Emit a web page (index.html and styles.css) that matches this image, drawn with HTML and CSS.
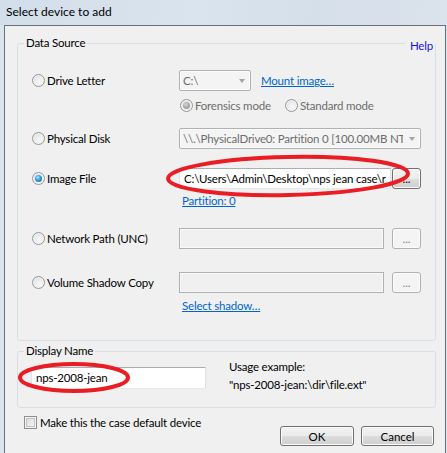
FILE: index.html
```html
<!DOCTYPE html>
<html lang="en">
<head>
<meta charset="utf-8">
<title>Select device to add</title>
<link rel="stylesheet" href="styles.css">
</head>
<body>
<div class="window">
  <div class="titlebar">Select device to add</div>
  <div class="client">
    <fieldset class="group data">
      <legend>Data Source</legend>
      <a class="help">Help</a>

      <div class="row drive">
        <label class="opt"><span class="radio"></span>Drive Letter</label>
        <div class="ctrl">
          <div class="combo small"><span class="val">C:\</span><span class="arrow"></span></div>
          <a class="link mount">Mount image…</a>
        </div>
      </div>

      <div class="row mode">
        <span></span>
        <div class="ctrl modes">
          <label class="opt dis forensic"><span class="radio on dis"></span>Forensics mode</label>
          <label class="opt dis"><span class="radio dis"></span>Standard mode</label>
        </div>
      </div>

      <div class="row physical">
        <label class="opt"><span class="radio"></span>Physical Disk</label>
        <div class="ctrl">
          <div class="combo wide"><span class="val">\\.\PhysicalDrive0: Partition 0 [100.00MB NTFS]</span><span class="arrow"></span></div>
        </div>
      </div>

      <div class="row image">
        <label class="opt"><span class="radio on"></span>Image File</label>
        <div class="ctrl">
          <div class="field path">C:\Users\Admin\Desktop\nps jean case\r</div>
          <button class="btn dots img-btn">...</button>
        </div>
      </div>

      <div class="row sub partition">
        <span></span>
        <a class="link sublink">Partition: 0</a>
      </div>

      <div class="row network">
        <label class="opt"><span class="radio"></span>Network Path (UNC)</label>
        <div class="ctrl">
          <div class="field dis short"></div>
          <button class="btn dots dis">...</button>
        </div>
      </div>

      <div class="row volume">
        <label class="opt"><span class="radio"></span>Volume Shadow Copy</label>
        <div class="ctrl">
          <div class="field dis short"></div>
          <button class="btn dots dis">...</button>
        </div>
      </div>

      <div class="row sub shadow">
        <span></span>
        <a class="link sublink">Select shadow…</a>
      </div>
    </fieldset>

    <fieldset class="group display">
      <legend>Display Name</legend>
      <div class="namerow">
        <div class="field namefield">nps-2008-jean</div>
        <div class="usage">
          <div>Usage example:</div>
          <div>"nps-2008-jean:\dir\file.ext"</div>
        </div>
      </div>
    </fieldset>

    <div class="footer">
      <label class="check"><span class="box"></span>Make this the case default device</label>
      <div class="buttons">
        <button class="btn ok">OK</button>
        <button class="btn cancel">Cancel</button>
      </div>
    </div>
  </div>
</div>
<svg class="marks" width="447" height="453" viewBox="0 0 447 453" aria-hidden="true">
  <ellipse cx="288" cy="176" rx="120" ry="19" transform="rotate(-1.2 288 176)" />
  <ellipse cx="74" cy="377.5" rx="54" ry="13.5" />
</svg>
</body>
</html>
```
FILE: styles.css
```css
* { box-sizing: border-box; }
html, body { margin: 0; padding: 0; }
body {
  width: 447px;
  height: 453px;
  overflow: hidden;
  position: relative;
  background: #dae4ee;
  font-family: Lato, "Liberation Sans", sans-serif;
  font-size: 11.5px;
  letter-spacing: -0.2px;
  color: #000;
}
.titlebar {
  height: 25px;
  padding-left: 6px;
  line-height: 24px;
  font-size: 12px;
  letter-spacing: 0;
  background: linear-gradient(100deg, #d2deea 0%, #dae4ee 45%, #d5dfea 70%, #dbe3ec 100%);
}
.client {
  margin: 0 1px 0 4px;
  height: 428px;
  border: 1px solid #6c7178;
  border-bottom: 0;
  background: #f0f0f0;
  padding: 9px 0 0 12px;
}
.group {
  position: relative;
  margin: 0;
  width: 419px;
  border: 1px solid #d5dfe5;
  border-radius: 3px;
  padding: 0 14px;
  min-width: 0;
}
.group legend {
  margin-left: -8px;
  padding: 0 2px;
  line-height: 16px;
}
.data { height: 306px; padding-top: 19px; }
.display { height: 65px; margin-top: 2px; padding-left: 13px; }
.display legend { margin-left: -7px; }

.help {
  position: absolute;
  right: 0;
  top: -13px;
  padding: 0 2px 0 5px;
  line-height: 16px;
  background: #f0f0f0;
  color: #1616e8;
}

.row {
  display: grid;
  grid-template-columns: 147px 242px;
  align-items: center;
}
.opt {
  display: flex;
  align-items: center;
  gap: 2px;
  white-space: nowrap;
}
.ctrl { display: flex; align-items: center; }
.drive { height: 21px; }
.mode { height: 13px; margin-top: 8px; }
.physical { height: 21px; margin-top: 16px; }
.image { height: 21px; margin-top: 19px; }
.partition { height: 15px; margin-top: 4px; }
.network { height: 21px; margin-top: 20px; }
.volume { height: 21px; margin-top: 23px; }
.shadow { height: 15px; margin-top: 5px; }

.modes { padding-left: 1px; }
.forensic { width: 105px; }
.dis { color: #6d6d6d; }

.radio {
  position: relative;
  flex: none;
  width: 13px;
  height: 13px;
  border-radius: 50%;
  border: 1px solid #94979a;
  background: radial-gradient(circle at 60% 65%, #f8f8f8 0%, #ececec 45%, #cfd2d6 100%);
  box-shadow: inset 0 0 0 1px #f5f5f5;
}
.radio.on::after {
  content: "";
  position: absolute;
  left: 2px;
  top: 2px;
  width: 7px;
  height: 7px;
  border-radius: 50%;
  background: radial-gradient(circle at 40% 35%, #b4eaff 0%, #35a2e8 40%, #0c5a9c 100%);
}
.radio.on.dis::after {
  background: radial-gradient(circle at 40% 35%, #d8d8d8 0%, #a8a8a8 50%, #8a8a8a 100%);
}

.link {
  color: #0066cc;
  text-decoration: underline;
  line-height: 15px;
  white-space: nowrap;
}
.mount { margin-left: 10px; }
.sublink { margin-left: 3px; }

.combo {
  display: flex;
  align-items: center;
  height: 21px;
  border: 1px solid #adb2b5;
  border-radius: 2px;
  background: #f4f4f4;
  box-shadow: inset 0 0 0 1px #fbfbfb;
  color: #6d6d6d;
  padding: 0 5px 0 3px;
  white-space: nowrap;
  overflow: hidden;
}
.combo.small { width: 72px; }
.combo.wide { width: 242px; }
.combo .val { flex: 1; overflow: hidden; min-width: 0; }
.arrow {
  flex: none;
  margin-left: 6px;
  margin-top: 1px;
  width: 0;
  height: 0;
  border-left: 3.5px solid transparent;
  border-right: 3.5px solid transparent;
  border-top: 4px solid #a4a4a4;
}

.field {
  height: 21px;
  border: 1px solid #abadb3;
  border-color: #abadb3 #dbdfe6 #e3e9ef #e2e3ea;
  background: #fff;
  padding: 0 4px;
  line-height: 19px;
  white-space: nowrap;
  overflow: hidden;
}
.field.path { width: 212px; }
.field.short { width: 205px; }
.field.dis {
  background: #f0f0f0;
  border: 1px solid #adb2b5;
  box-shadow: inset 0 0 0 1px #f9f9f9;
}

.btn {
  font: inherit;
  color: #000;
  height: 21px;
  border: 1px solid #707070;
  border-radius: 3px;
  background: linear-gradient(#f2f2f2 0%, #ebebeb 50%, #dddddd 50%, #cfcfcf 100%);
  box-shadow: inset 0 0 0 1px #fbfbfb;
  padding: 0;
  line-height: 17px;
}
.btn.dots { width: 29px; margin-left: 8px; }
.btn.img-btn { margin-left: 1px; }
.btn.dis {
  border-color: #adb2b5;
  background: #f4f4f4;
  color: #838383;
}

.namerow {
  display: flex;
  align-items: flex-start;
  margin-top: 8px;
}
.namefield {
  width: 175px;
  height: 22px;
  line-height: 20px;
}
.usage {
  margin-left: 23px;
  margin-top: -9px;
  line-height: 18px;
}

.footer {
  display: flex;
  align-items: flex-start;
  width: 417px;
  padding-left: 7px;
  margin-top: 8px;
}
.check {
  display: flex;
  align-items: center;
  gap: 3px;
  height: 13px;
  white-space: nowrap;
}
.box {
  flex: none;
  width: 13px;
  height: 13px;
  border: 1px solid #8e8f8f;
  background: linear-gradient(135deg, #d6d6d6, #fafafa);
  box-shadow: inset 0 0 0 1px #f4f4f4, inset 0 0 0 2px #bfc3c8;
}
.buttons {
  margin-left: auto;
  margin-top: 10px;
  display: flex;
  gap: 7px;
}
.btn.ok { width: 74px; height: 20px; }
.btn.cancel { width: 73px; height: 20px; }

.marks {
  position: absolute;
  left: 0;
  top: 0;
  pointer-events: none;
}
.marks ellipse {
  fill: none;
  stroke: #ea1c24;
  stroke-width: 4;
}
```
